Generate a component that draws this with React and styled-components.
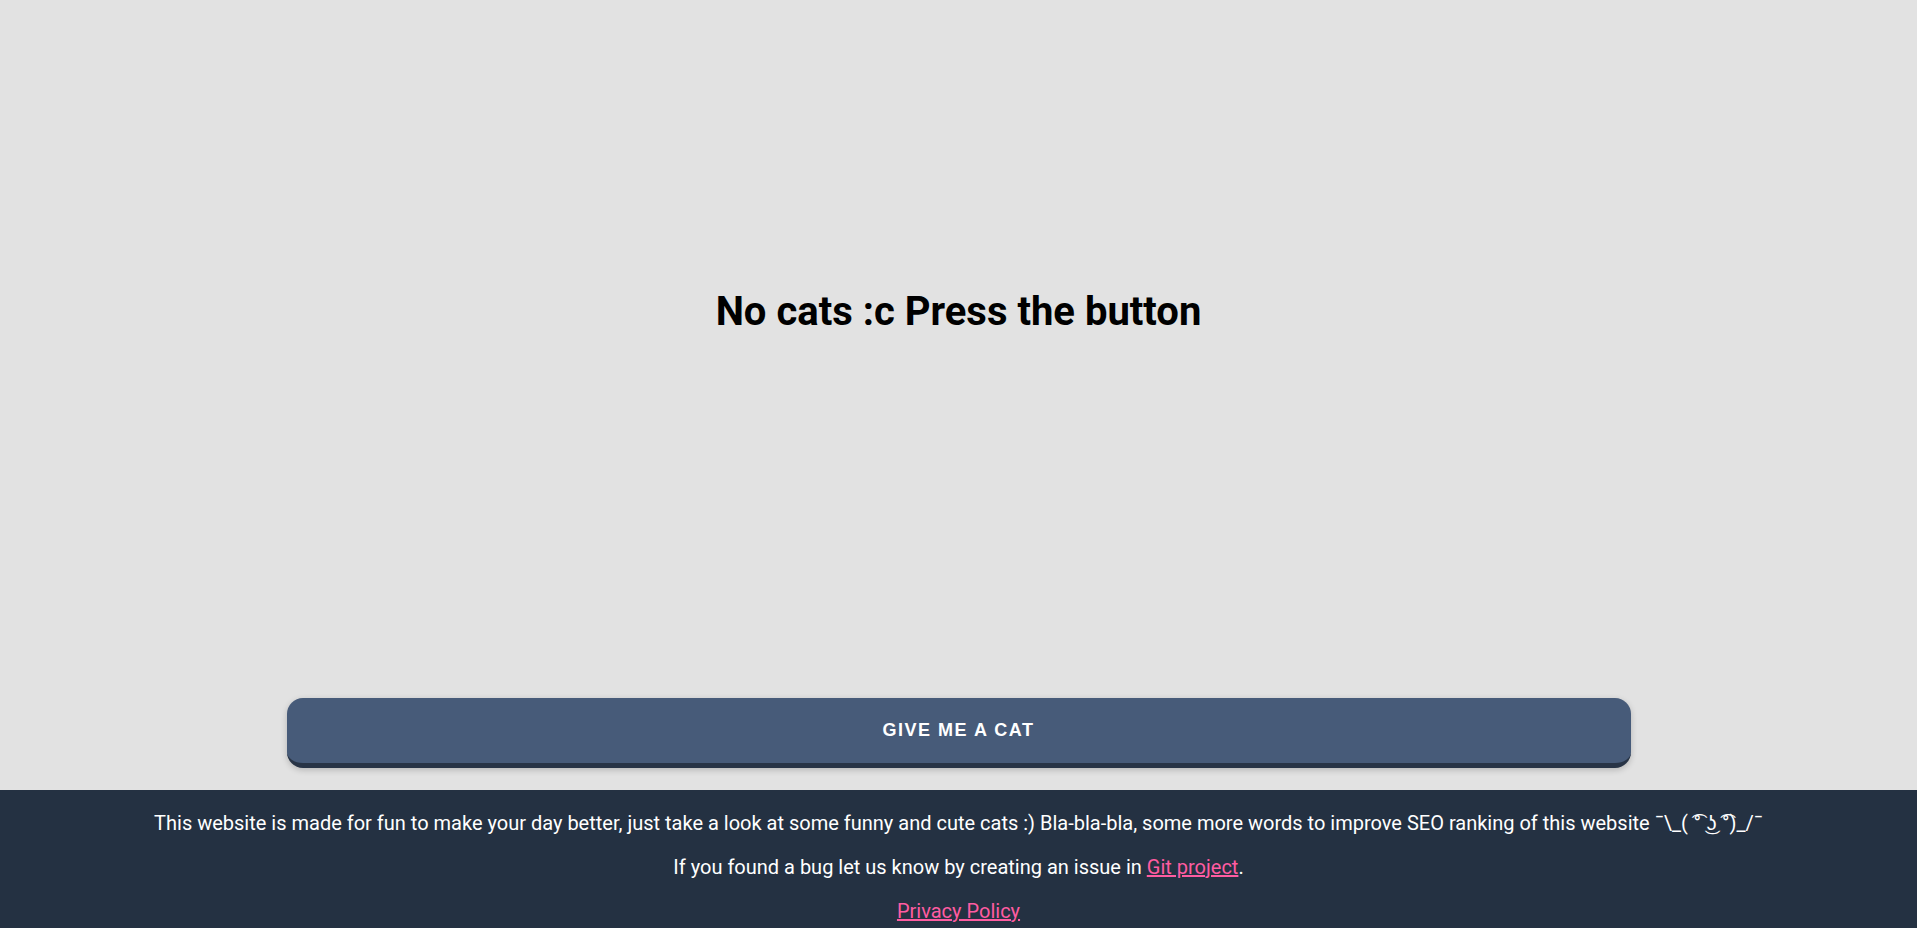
import React from "react";
import styled, { createGlobalStyle } from "styled-components";

const GlobalStyle = createGlobalStyle`
  body {
    margin: 0;
    background-color: #e2e2e2;
    font-family: Roboto, "Liberation Sans", sans-serif;
  }
`;

const Page = styled.div`
  display: flex;
  flex-direction: column;
`;

const Main = styled.main`
  display: flex;
  flex-direction: column;
  align-items: center;
  height: 790px;
`;

const CatArea = styled.section`
  flex: 1;
  display: flex;
  align-items: center;
  justify-content: center;
  width: 100%;
`;

const Title = styled.h1`
  margin: 0;
  font-size: 40px;
  font-weight: 700;
  color: #000;
`;

const CatButton = styled.button`
  width: 1344px;
  max-width: 90%;
  height: 70px;
  margin: 75px 0 22px;
  border: none;
  border-bottom: 5px solid #283446;
  border-radius: 16px;
  background-color: #475b79;
  color: #fff;
  font-family: "Liberation Sans", Arial, sans-serif;
  font-size: 18px;
  font-weight: 700;
  letter-spacing: 1.5px;
  text-transform: uppercase;
  box-shadow: 0 2px 6px rgba(0, 0, 0, 0.2);
  cursor: pointer;
`;

const Footer = styled.footer`
  background-color: #243142;
  color: #fff;
  padding: 1px 16px;
  text-align: center;
`;

const Text = styled.p`
  margin: 20px 0;
  font-size: 20px;
  line-height: 24px;
`;

const Link = styled.a`
  color: #ff5ca1;
`;

const App = () => {
  return (
    <Page>
      <GlobalStyle />
      <Main>
        <CatArea>
          <Title>No cats :c Press the button</Title>
        </CatArea>
        <CatButton>Give me a cat</CatButton>
      </Main>
      <Footer>
        <Text>
          This website is made for fun to make your day better, just take a look at some funny and cute cats :)
          Bla-bla-bla, some more words to improve SEO ranking of this website ¯\_( ͡° ͜ʖ ͡°)_/¯
        </Text>
        <Text>
          If you found a bug let us know by creating an issue in <Link href="#">Git project</Link>.
        </Text>
        <Text>
          <Link href="#">Privacy Policy</Link>
        </Text>
      </Footer>
    </Page>
  );
};

export default App;
